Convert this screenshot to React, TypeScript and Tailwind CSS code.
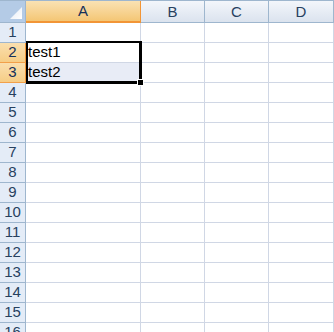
import React from "react";

const cols = [
  { key: "A", w: "w-[115px]" },
  { key: "B", w: "w-[64px]" },
  { key: "C", w: "w-[64px]" },
  { key: "D", w: "w-[65px]" },
];

const data: Record<string, string> = { A2: "test1", A3: "test2" };

export default function App() {
  const rows = Array.from({ length: 16 }, (_, i) => i + 1);
  return (
    <div
      className="relative w-[334px] h-[332px] overflow-hidden bg-white text-[15px] text-black"
      style={{ fontFamily: '"Liberation Sans", Arial, sans-serif' }}
    >
      {/* header row */}
      <div className="flex h-[23px] border-t border-[#9eb6ce]">
        <div className="w-[26px] h-full border-r border-b border-[#9eb6ce] bg-[#b4cbe6] relative shrink-0">
          <svg className="absolute left-[10px] top-[6px]" width="12" height="12" viewBox="0 0 12 12">
            <defs>
              <linearGradient id="tri" x1="0" y1="0" x2="1" y2="1">
                <stop offset="0" stopColor="#e3eaf4" />
                <stop offset="1" stopColor="#ffffff" />
              </linearGradient>
            </defs>
            <polygon points="12,0 12,12 0,12" fill="url(#tri)" />
          </svg>
        </div>
        {cols.map((c) =>
          c.key === "A" ? (
            <div
              key={c.key}
              className={`${c.w} shrink-0 h-full flex items-center justify-center border-r border-b-2 border-r-[#f29536] border-b-[#f29536] bg-gradient-to-b from-[#fae2b3] to-[#f4c674] text-[#15305a]`}
            >
              <span className="pt-[1px]">A</span>
            </div>
          ) : (
            <div
              key={c.key}
              className={`${c.w} shrink-0 h-full flex items-center justify-center border-r border-b border-[#9eb6ce] bg-gradient-to-b from-[#f3f6fb] to-[#dbe3ee] text-[#27415f]`}
            >
              <span className="pt-[1px]">{c.key}</span>
            </div>
          )
        )}
      </div>
      {rows.map((r) => {
        const sel = r === 2 || r === 3;
        return (
          <div key={r} className="flex h-[20px]">
            <div
              className={`w-[26px] shrink-0 h-full flex items-center justify-center border-r border-b ${
                sel
                  ? "bg-gradient-to-b from-[#fadfae] to-[#f6cd85] border-[#f2a04a] border-r-[#f29536] text-[#15305a]"
                  : "bg-[#e4ecf7] border-[#9eb6ce] text-[#27415f]"
              }`}
            >
              {r}
            </div>
            {cols.map((c) => {
              const id = `${c.key}${r}`;
              const fill = id === "A3" ? "bg-[#e8ecf6]" : "bg-white";
              return (
                <div
                  key={id}
                  className={`${c.w} shrink-0 h-full border-r border-b border-[#d0d7e5] ${fill} flex items-center pl-[2px] overflow-hidden whitespace-nowrap`}
                >
                  {data[id] ?? ""}
                </div>
              );
            })}
          </div>
        );
      })}
      {/* selection border */}
      <div className="absolute left-[26px] top-[41px] w-[116px] h-[43px] border-2 border-r-[3px] border-b-[3px] border-black pointer-events-none" />
      {/* fill handle */}
      <div className="absolute left-[137px] top-[79px] w-[7px] h-[7px] bg-black border border-white" />
    </div>
  );
}
